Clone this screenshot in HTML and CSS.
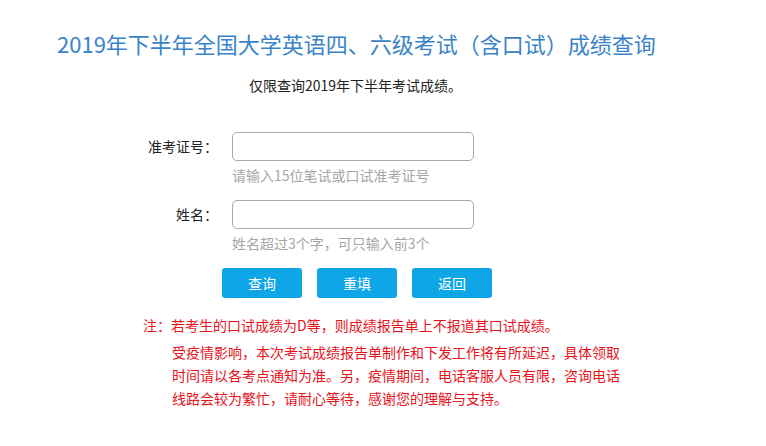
FILE: index.html
```html
<!DOCTYPE html>
<html lang="zh-CN">
<head>
<meta charset="UTF-8">
<title>2019年下半年全国大学英语四、六级考试（含口试）成绩查询</title>
<link rel="stylesheet" href="styles.css">
</head>
<body>
<div class="page">
    <h1 class="title">2019年下半年全国大学英语四、六级考试（含口试）成绩查询</h1>
    <p class="sub">仅限查询2019年下半年考试成绩。</p>

    <form class="query-form">
        <div class="row">
            <label class="label" for="zkzh">准考证号：</label>
            <div class="field">
                <input class="txt" id="zkzh" type="text">
                <div class="hint">请输入15位笔试或口试准考证号</div>
            </div>
        </div>
        <div class="row">
            <label class="label" for="xm">姓名：</label>
            <div class="field">
                <input class="txt" id="xm" type="text">
                <div class="hint">姓名超过3个字，可只输入前3个</div>
            </div>
        </div>
        <div class="btns">
            <button type="button" class="btn">查询</button>
            <button type="reset" class="btn">重填</button>
            <button type="button" class="btn">返回</button>
        </div>
    </form>

    <div class="note">
        <p class="note-main">注：若考生的口试成绩为D等，则成绩报告单上不报道其口试成绩。</p>
        <p class="note-extra">受疫情影响，本次考试成绩报告单制作和下发工作将有所延迟，具体领取时间请以各考点通知为准。另，疫情期间，电话客服人员有限，咨询电话线路会较为繁忙，请耐心等待，感谢您的理解与支持。</p>
    </div>
</div>
</body>
</html>
```

FILE: styles.css
```css
body {
    margin: 0;
    background: #fff;
    font-family: "Noto Sans CJK SC", "Noto Sans", sans-serif;
    font-size: 14px;
    color: #333;
}

.page {
    width: 766px;
}

.title {
    margin: 28px 0 0 57px;
    font-size: 22px;
    font-weight: normal;
    line-height: 30px;
    color: #3a83c8;
}

.sub {
    margin: 17px 0 0 249px;
    line-height: 20px;
    color: #222;
}

.query-form {
    margin-top: 37px;
}

.row {
    display: grid;
    grid-template-columns: 218px 242px;
    column-gap: 14px;
    margin-bottom: 15px;
}

.label {
    text-align: right;
    line-height: 29px;
    color: #222;
}

.txt {
    display: block;
    box-sizing: border-box;
    width: 242px;
    height: 29px;
    margin: 0;
    border: 1px solid #a9a9a9;
    border-radius: 5px;
    outline: none;
}

.hint {
    margin-top: 4px;
    line-height: 20px;
    color: #a6a6a6;
}

.btns {
    display: flex;
    gap: 15px;
    padding-left: 222px;
    margin-top: 1px;
}

.btn {
    width: 80px;
    height: 30px;
    border: 0;
    border-radius: 3px;
    background: #0ea6e6;
    color: #fff;
    font-family: inherit;
    font-size: 14px;
    cursor: pointer;
}

.note {
    margin-top: 16px;
    color: #e8121b;
    line-height: 23px;
}

.note-main {
    margin: 0 0 4px 143px;
}

.note-extra {
    margin: 0 0 0 172px;
    width: 450px;
}
```
